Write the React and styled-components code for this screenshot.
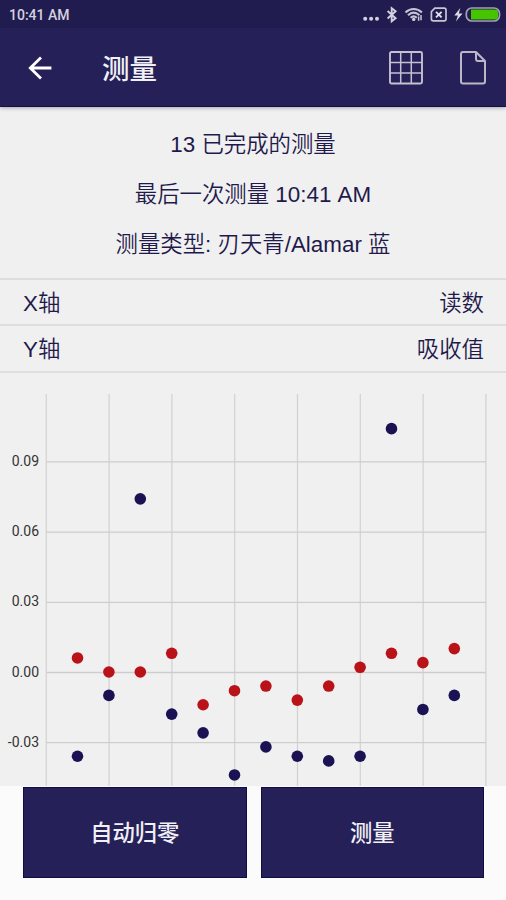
import styled, { createGlobalStyle } from "styled-components";

const xStep = 31.4;
const left = 46.3;
const zeroY = 284.5;
const unit = 70.2 / 0.03;

const ticks = [0.09, 0.06, 0.03, 0, -0.03];
const columns = [0, 2, 4, 6, 8, 10, 12, 14];

const series = [
  {
    color: "#1b1254",
    values: [
      -0.036, -0.01, 0.074, -0.018, -0.026, -0.044, -0.032, -0.036, -0.038,
      -0.036, 0.104, -0.016, -0.01,
    ],
  },
  {
    color: "#b91319",
    values: [
      0.006, 0, 0, 0.008, -0.014, -0.008, -0.006, -0.012, -0.006, 0.002, 0.008,
      0.004, 0.01,
    ],
  },
];

const toY = (value) => zeroY - value * unit;

const StatusIcons = () => (
  <svg width="140" height="28" viewBox="362 0 140 28" fill="none">
    <g fill="#d2d0df">
      <circle cx="365.2" cy="18.8" r="2" />
      <circle cx="371.1" cy="18.8" r="2" />
      <circle cx="377" cy="18.8" r="2" />
    </g>
    <path
      d="M387.6 11l8 7.2-3.9 3.1V8.2l3.9 3.1-8 7.2"
      stroke="#d2d0df"
      strokeWidth="1.9"
    />
    <g stroke="#c6c4d5" strokeWidth="2.1">
      <path d="M405.5 12.4c5-4.6 11.4-4.6 16.4 0" />
      <path d="M408 15.2c3.6-3.3 7.8-3.3 11.4 0" />
      <path d="M410.6 17.8c2-1.8 4.2-1.8 6.2 0" />
      <path d="M418.6 20.8v-4.4M421 15v5.2" strokeWidth="1.5" />
    </g>
    <circle cx="413.7" cy="19.4" r="1.7" fill="#d2d0df" />
    <path
      d="M434.8 8.2h9.4q1.8 0 1.8 1.8v9q0 1.8-1.8 1.8h-11q-1.8 0-1.8-1.8v-7.4z"
      stroke="#c6c4d5"
      strokeWidth="1.7"
    />
    <path d="M436 11.8l5.6 5.6m0-5.6l-5.6 5.6" stroke="#e2e0ea" strokeWidth="1.9" />
    <path d="M460.3 8l-6 7.6h3.6l-2 5.8 6.6-7.8h-3.7z" fill="#dddbe6" />
    <rect
      x="466.3"
      y="8"
      width="33.2"
      height="13"
      rx="5.5"
      stroke="#a3a1b2"
      strokeWidth="1.7"
    />
    <path d="M471 9.6h24q3 0 3 3v3.8q0 3-3 3h-24z" fill="#45c400" />
  </svg>
);

const BackArrow = () => (
  <svg width="24" height="24" viewBox="0 0 24 24" fill="none">
    <path
      d="M23.4 12H2M13 1.6L2.3 12 13 22.4"
      stroke="#fff"
      strokeWidth="2.8"
    />
  </svg>
);

const GridIcon = () => (
  <svg width="34" height="34" viewBox="0 0 34 34" fill="none" stroke="#c3c1d0">
    <rect x="1" y="1" width="32" height="31.5" rx="1.5" strokeWidth="1.9" />
    <path
      d="M11.7 1v31.5M22.3 1v31.5M1 11.5h32M1 22h32"
      strokeWidth="1.5"
    />
  </svg>
);

const FileIcon = () => (
  <svg
    width="26"
    height="34"
    viewBox="0 0 26 34"
    fill="none"
    stroke="#b9b7c8"
    strokeWidth="2"
    strokeLinejoin="round"
  >
    <path d="M3 1h13L25 10V30.5q0 2-2 2H3q-2 0-2-2V3q0-2 2-2z" />
    <path d="M16 1.5V8q0 2 2 2h6.5" />
  </svg>
);

const Chart = () => (
  <ChartSvg width="506" height="400" viewBox="0 0 506 400">
    {columns.map((c) => (
      <line
        key={c}
        x1={left + c * xStep}
        x2={left + c * xStep}
        y1="6"
        y2="400"
        stroke="#d3d3d3"
        strokeWidth="1.3"
      />
    ))}
    {ticks.map((tick) => (
      <g key={tick}>
        <line
          x1={left}
          x2={left + 14 * xStep}
          y1={toY(tick)}
          y2={toY(tick)}
          stroke="#cdcdcd"
          strokeWidth="1.3"
        />
        <TickLabel x="39" y={toY(tick) + 4}>
          {tick.toFixed(2)}
        </TickLabel>
      </g>
    ))}
    {series.map((s) =>
      s.values.map((value, i) => (
        <circle
          key={s.color + i}
          cx={left - 0.2 + (i + 1) * xStep}
          cy={toY(value) - 0.5}
          r="5.8"
          fill={s.color}
        />
      ))
    )}
  </ChartSvg>
);

const App = () => {
  return (
    <Screen>
      <GlobalStyle />
      <Header>
        <StatusBar>
          <Clock>10:41 AM</Clock>
          <StatusIcons />
        </StatusBar>
        <Toolbar>
          <BackArrow />
          <Title>测量</Title>
          <Actions>
            <GridIcon />
            <FileIcon />
          </Actions>
        </Toolbar>
      </Header>
      <Content>
        <Summary>
          <SummaryLine>13 已完成的测量</SummaryLine>
          <SummaryLine>最后一次测量 10:41 AM</SummaryLine>
          <SummaryLine>测量类型: 刃天青/Alamar 蓝</SummaryLine>
        </Summary>
        <AxisRow $height={46}>
          <span>X轴</span>
          <span>读数</span>
        </AxisRow>
        <AxisRow $height={47}>
          <span>Y轴</span>
          <span>吸收值</span>
        </AxisRow>
        <ChartArea>
          <Chart />
        </ChartArea>
      </Content>
      <Footer>
        <Button>自动归零</Button>
        <Button>测量</Button>
      </Footer>
    </Screen>
  );
};

const GlobalStyle = createGlobalStyle`
  body {
    margin: 0;
    background: #fbfbfb;
  }
`;

const Screen = styled.div`
  display: flex;
  flex-direction: column;
  width: 506px;
  height: 900px;
  overflow: hidden;
  color: #1f1a4b;
  font-family: "Liberation Sans", "Noto Sans CJK SC", sans-serif;
  font-size: 22.4px;
`;

const Header = styled.header`
  z-index: 1;
  flex: none;
  height: 107px;
  background: #252058;
  border-bottom: 1px solid #16104a;
  box-sizing: border-box;
  box-shadow: 0 1px 4px rgba(0, 0, 0, 0.3);
`;

const StatusBar = styled.div`
  display: flex;
  justify-content: space-between;
  align-items: center;
  height: 28px;
  padding: 0 4px 0 9px;
  background: #211c4f;
`;

const Clock = styled.span`
  padding-top: 1px;
  color: #d3d1df;
  font-family: Roboto, sans-serif;
  font-size: 14px;
  font-weight: 500;
`;

const Toolbar = styled.div`
  display: flex;
  align-items: center;
  height: 80px;
  padding: 0 20px 0 28px;
`;

const Title = styled.h1`
  margin: 0 0 0 50px;
  padding-top: 3px;
  color: #f1f0f6;
  font-size: 27.5px;
  font-weight: 500;
  line-height: 40px;
`;

const Actions = styled.div`
  display: flex;
  gap: 37px;
  margin-left: auto;
`;

const Content = styled.main`
  display: flex;
  flex-direction: column;
  flex: none;
  height: 679px;
  overflow: hidden;
  background: #f0f0f0;
  font-weight: 350;
`;

const Summary = styled.div`
  flex: none;
  height: 171px;
  padding-top: 13px;
  box-sizing: border-box;
  text-align: center;
`;

const SummaryLine = styled.p`
  margin: 0;
  height: 50px;
  line-height: 50px;
`;

const AxisRow = styled.div`
  display: flex;
  flex: none;
  justify-content: space-between;
  align-items: center;
  height: ${(props) => props.$height}px;
  padding: 0 22px 3px 23px;
  border-top: 2px solid #dedede;
  box-sizing: border-box;
`;

const ChartArea = styled.div`
  flex: 1;
  padding-top: 15px;
  border-top: 2px solid #dedede;
`;

const ChartSvg = styled.svg`
  display: block;
`;

const TickLabel = styled.text`
  fill: #333;
  font-family: Roboto, sans-serif;
  font-size: 14px;
  font-weight: 400;
  text-anchor: end;
`;

const Footer = styled.footer`
  display: flex;
  flex: 1;
  gap: 14px;
  padding: 0 22px 0 23px;
  background: #fbfbfb;
`;

const Button = styled.button`
  flex: 1;
  height: 91px;
  margin-top: 1px;
  padding: 0 0 4px;
  border: 1px solid #130b45;
  background: #252058;
  color: #f1f0f6;
  font-family: inherit;
  font-size: 22.3px;
  font-weight: 500;
`;

export default App;
